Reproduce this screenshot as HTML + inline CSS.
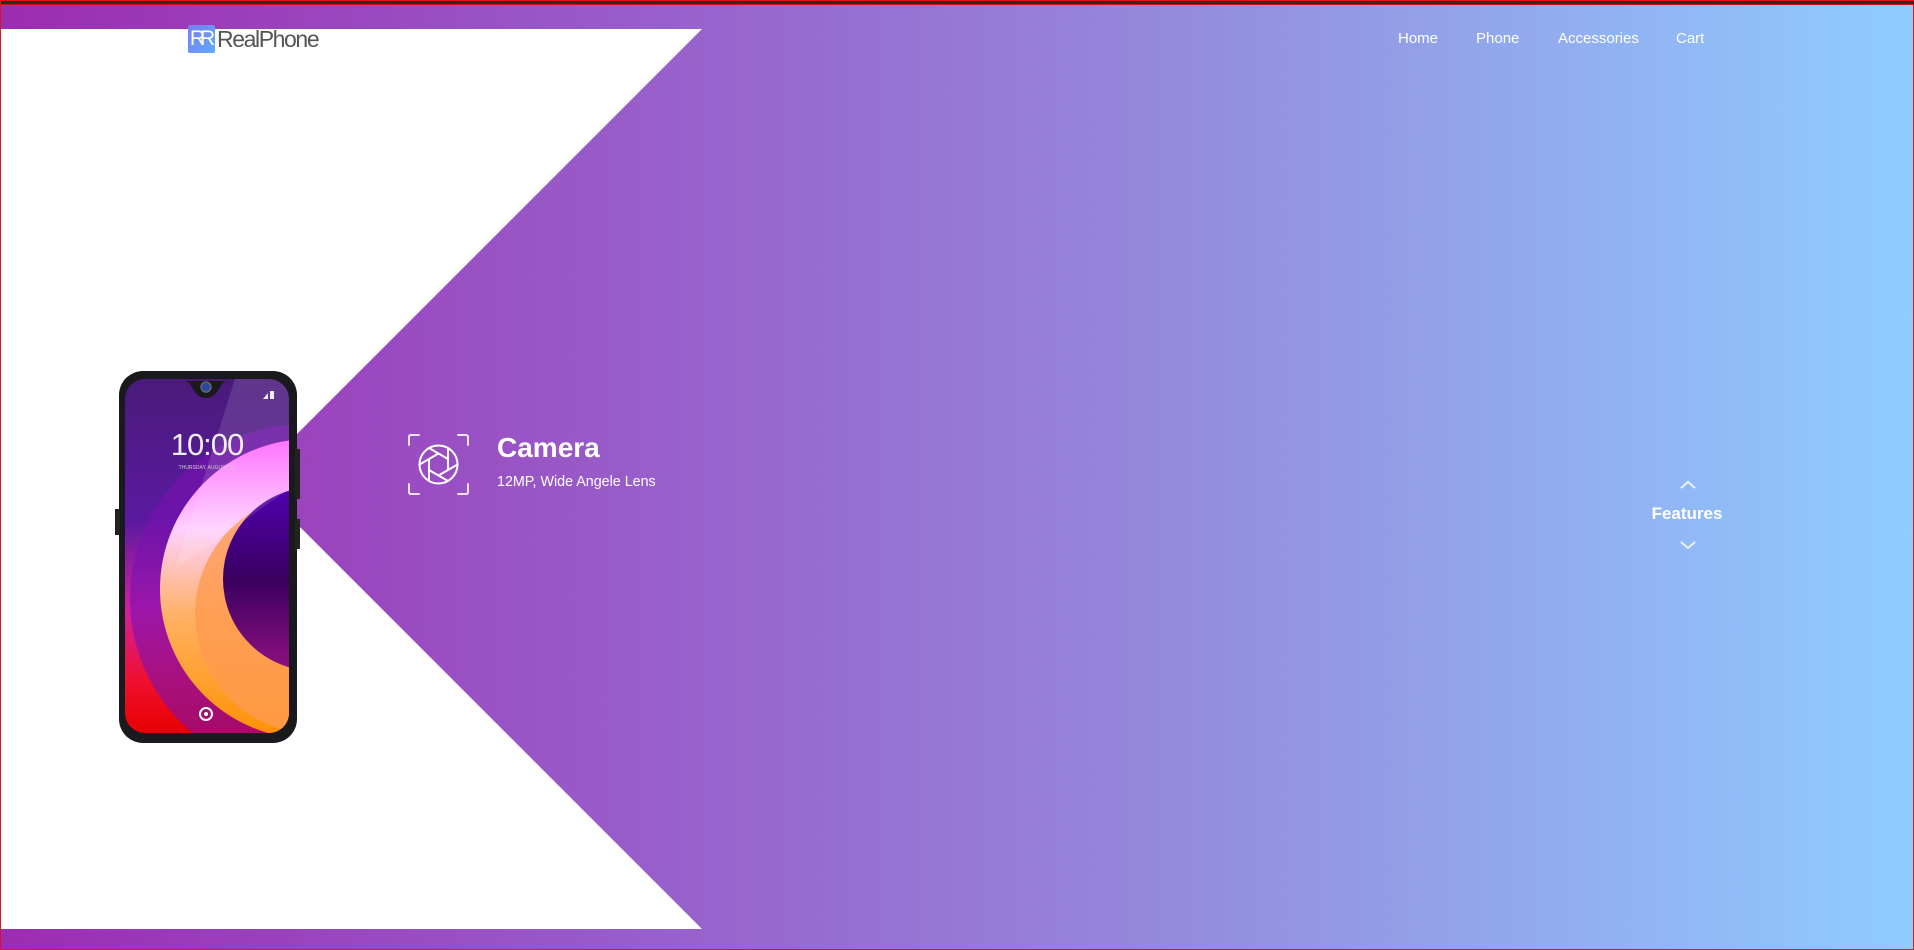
<!DOCTYPE html>
<html><head><meta charset="utf-8"><style>
html,body{margin:0;padding:0;width:1914px;height:950px;overflow:hidden}
body{position:relative;font-family:"Liberation Sans",sans-serif;background:linear-gradient(90deg,#9c2cb0 0%,#9860cc 35%,#9490e0 65%,#8fcdff 100%);box-sizing:border-box;border:1px solid #e0141c}
.topline{position:absolute;left:0;top:0;width:1914px;height:3px;background:#2a2a2a;border-bottom:1px solid #d01010}
svg.white{position:absolute;left:0;top:0}
.logo{position:absolute;left:187px;top:24px;display:flex;align-items:center}
.logo .ic{width:27px;height:28px;border-radius:2px;background:linear-gradient(135deg,#7a7cf0,#60aaff);color:#fff;font-size:21px;line-height:28px;text-align:center;letter-spacing:-5px;font-family:"Liberation Sans Narrow","Liberation Sans",sans-serif;padding-right:3px;box-sizing:border-box}
.logo .tx{color:#555;font-size:23px;letter-spacing:-1.4px;margin-left:2px}
.nav a{position:absolute;top:29px;color:#fff;font-size:15px;text-decoration:none}
.feat{position:absolute;left:1636px;width:100px;text-align:center;color:#fff}
.cam-t{position:absolute;left:496px;top:431px;color:#fff;font-size:28px;font-weight:bold}
.cam-s{position:absolute;left:496px;top:473px;color:#fff;font-size:14.3px}
</style></head><body>
<div class="topline"></div>
<svg class="white" width="1914" height="950"><polygon points="0,28 701,28 251,478 701,928 0,928" fill="#fff"/></svg>
<div class="logo"><div class="ic">RR</div><div class="tx">RealPhone</div></div>
<div class="nav"><a style="left:1397px">Home</a><a style="left:1475px">Phone</a><a style="left:1557px">Accessories</a><a style="left:1675px">Cart</a></div>

<svg style="position:absolute;left:114px;top:368px" width="186" height="376" viewBox="0 0 186 376">
<defs>
<linearGradient id="bg" x1="0" y1="0" x2="0" y2="1"><stop offset="0" stop-color="#4a1a7a"/><stop offset=".4" stop-color="#5a1aa0"/><stop offset=".65" stop-color="#d020a0"/><stop offset=".85" stop-color="#ee1030"/><stop offset="1" stop-color="#e80000"/></linearGradient>
<clipPath id="sc"><rect x="10" y="10" width="164" height="354" rx="20"/></clipPath>
<linearGradient id="ring" x1="0" y1="0" x2="0" y2="1"><stop offset="0" stop-color="#ff60ff"/><stop offset=".3" stop-color="#ffd0ff"/><stop offset=".6" stop-color="#ffb060"/><stop offset="1" stop-color="#ff9000"/></linearGradient>
<linearGradient id="inner" x1="0" y1="0" x2="0" y2="1"><stop offset="0" stop-color="#5000b0"/><stop offset=".5" stop-color="#3a0060"/><stop offset="1" stop-color="#901080"/></linearGradient>
</defs>
<rect x="4" y="2" width="178" height="372" rx="24" fill="#1a1a1e"/>
<rect x="0" y="140" width="5" height="26" fill="#222"/>
<rect x="180" y="80" width="5" height="50" fill="#222"/>
<rect x="180" y="150" width="5" height="30" fill="#222"/>
<g clip-path="url(#sc)">
<rect x="10" y="10" width="164" height="354" fill="url(#bg)"/>
<circle cx="190" cy="230" r="175" fill="#7a10b0" opacity=".6"/>
<circle cx="195" cy="220" r="150" fill="url(#ring)"/>
<circle cx="200" cy="245" r="120" fill="#ff9a50" opacity=".8"/>
<circle cx="200" cy="210" r="92" fill="url(#inner)"/>
<polygon points="120,10 174,10 174,120 60,200" fill="#fff" opacity=".12"/>
</g>
<path d="M70 12 h42 q-4 0 -8 8 q-5 9 -13 9 q-8 0 -13 -9 q-4 -8 -8 -8z" fill="#1a1a1e"/>
<circle cx="91" cy="18" r="5" fill="#2a4aa0" stroke="#666" stroke-width="1.5"/>
<text x="92" y="86" fill="#eee" font-size="31" text-anchor="middle" font-family="Liberation Sans" letter-spacing="-1">10:00</text>
<text x="92" y="100" fill="#ccc" font-size="5" text-anchor="middle" font-family="Liberation Sans">THURSDAY, AUGUST 31</text>
<circle cx="91" cy="345" r="6" fill="none" stroke="#fff" stroke-width="2"/><circle cx="91" cy="345" r="2" fill="#fff"/>
<path d="M148 30 l5 -6 v6z M155 22 h4 v8 h-4z" fill="#eee"/>
</svg>

<svg style="position:absolute;left:406px;top:432px" width="63" height="63" viewBox="0 0 63 63" fill="none" stroke="#fff" stroke-width="2" stroke-linecap="round">
<path d="M2 12 V4 Q2 2 4 2 H12 M51 2 H59 Q61 2 61 4 V12 M61 51 V59 Q61 61 59 61 H51 M12 61 H4 Q2 61 2 59 V51" stroke-opacity=".85"/>
<circle cx="31.5" cy="31.5" r="19"/>
<path d="M50.5 31.5 L31.5 42.5 M41 48 L22 37 M22 48 L22 26 M12.5 31.5 L31.5 20.5 M22 15 L41 26 M41 15 L41 37"/>
</svg>
<div class="cam-t">Camera</div>
<div class="cam-s">12MP, Wide Angele Lens</div>

<svg style="position:absolute;left:1678px;top:478px" width="18" height="12" viewBox="0 0 18 12"><path d="M2 9 L9 3 L16 9" stroke="#fff" stroke-opacity=".8" stroke-width="2" fill="none"/></svg>
<div class="feat" style="top:503px;font-size:17px;font-weight:bold">Features</div>
<svg style="position:absolute;left:1678px;top:538px" width="18" height="12" viewBox="0 0 18 12"><path d="M2 3 L9 9 L16 3" stroke="#fff" stroke-opacity=".8" stroke-width="2" fill="none"/></svg>
</body></html>
